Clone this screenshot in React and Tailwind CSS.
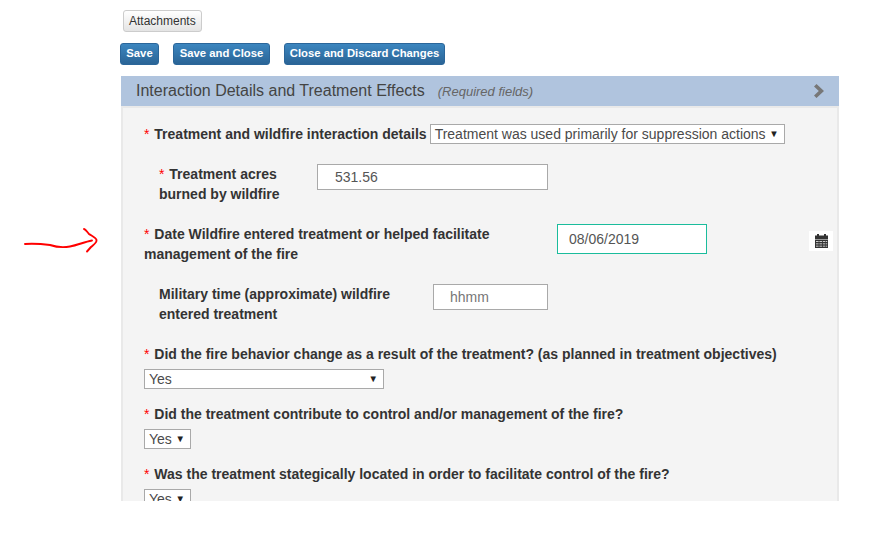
import React from "react";

const Star = () => <span className="text-[#ff0000] font-normal mr-[1px]">*</span>;

const Sel = ({ w, children }) => (
  <div className={`flex items-center justify-between h-[20px] bg-white border border-[#a9a9a9] pl-[4px] pr-[5px] font-normal text-[14px] text-[#4a4a4a] leading-none ${w}`}>
    <span>{children}</span>
    <span className="text-[9.5px] text-[#222]">▼</span>
  </div>
);

const Btn = ({ w, children }) => (
  <button className={`h-[22px] rounded-[3px] border border-[#2b669a] bg-gradient-to-b from-[#3c86bf] to-[#2a6496] text-white text-[11.3px] font-bold leading-none ${w}`}>
    {children}
  </button>
);

const Cal = () => (
  <svg width="13" height="14" viewBox="0 0 13 14" fill="#333">
    <rect x="2" y="0" width="2" height="2" />
    <rect x="9" y="0" width="2" height="2" />
    <path d="M0 1.5h13V5H0z" />
    <path fillRule="evenodd" d="M0 5.500h13V14H0z M1 7.300h2.600v.6H1z M4.400 7.300h2.600v.6H4.400z M7.800 7.300h2.200v.6H7.800z M10.600 7.300h1.600v.6h-1.600z M1 9.600h2.600v.6H1z M4.400 9.600h2.600v.6H4.400z M7.800 9.600h2.200v.6H7.800z M10.600 9.600h1.600v.6h-1.600z M1 11.800h2.600v.6H1z M4.400 11.800h2.600v.6H4.400z M7.800 11.800h2.200v.6H7.800z M10.600 11.800h1.600v.6h-1.600z" />
  </svg>
);

export default function App() {
  return (
    <div className="relative w-[890px] h-[535px] overflow-hidden bg-white font-['Liberation_Sans',Arial,sans-serif] text-[14px] text-[#333]">
      <svg className="absolute left-[20px] top-[225px]" width="85" height="32" viewBox="0 0 85 32" fill="none" stroke="#f00" strokeWidth="1.9" strokeLinecap="round" strokeLinejoin="round">
        <path d="M5 19 C14 18.500 22 19 30 20 C36 22 42 23 50 21.500 C58 20 64 17 72 15.500" />
        <path d="M64 4 C66 4.500 67 7 69 9 C72 11 76 12.500 76.500 15 C77 18 73 20 71 22 L67 26.500" />
      </svg>

      <div className="ml-[120px] w-[719px] flex flex-col">
        <div className="pt-[10px] pl-[3px]">
          <button className="h-[22px] px-[5px] rounded-[3px] border border-[#ccc] bg-gradient-to-b from-white to-[#e4e4e4] text-[12px] text-[#333] leading-none">
            Attachments
          </button>
        </div>
        <div className="flex mt-[11px] gap-[14px]">
          <Btn w="w-[39px]">Save</Btn>
          <Btn w="w-[97px]">Save and Close</Btn>
          <Btn w="w-[161px]">Close and Discard Changes</Btn>
        </div>
        <div className="ml-[1px] mt-[11px] h-[30px] bg-[#b0c4de] flex items-center justify-between pl-[15px] pr-[14px]">
          <div className="flex items-baseline">
            <span className="text-[16px] text-[#444]">Interaction Details and Treatment Effects</span>
            <span className="ml-[13px] text-[13px] italic text-[#666]">(Required fields)</span>
          </div>
          <svg width="12" height="14" viewBox="0 0 12 14" fill="#777"><path d="M1 2.500 L3.500 0 L11 7 L3.500 14 L1 11.500 L5.800 7 Z" /></svg>
        </div>
        <div className="ml-[1px] h-[395px] overflow-hidden bg-[#f4f4f4] border-x-2 border-t-2 border-[#e9e9e9] pl-[21px] font-bold">
          <div className="flex items-center mt-[16px] h-[20px]">
            <span><Star /> Treatment and wildfire interaction details</span>
            <Sel w="ml-[3px] w-[355px]">Treatment was used primarily for suppression actions</Sel>
          </div>
          <div className="flex mt-[20px] pl-[15px]">
            <div className="w-[158px] leading-[20px]"><Star /> Treatment acres<br />burned by wildfire</div>
            <div className="h-[26px] w-[231px] bg-white border border-[#a9a9a9] pl-[17px] font-normal text-[#555] flex items-center">531.56</div>
          </div>
          <div className="flex mt-[20px]">
            <div className="w-[413px] leading-[20px]"><Star /> Date Wildfire entered treatment or helped facilitate<br />management of the fire</div>
            <div className="h-[30px] w-[150px] bg-white border border-[#1abc9c] pl-[11px] font-normal text-[#555] flex items-center">08/06/2019</div>
            <div className="ml-[102px] mt-[7px] w-[24px] h-[20px] bg-white flex items-center justify-center"><Cal /></div>
          </div>
          <div className="flex mt-[20px] pl-[15px]">
            <div className="w-[274px] leading-[20px]">Military time (approximate) wildfire<br />entered treatment</div>
            <div className="h-[26px] w-[115px] bg-white border border-[#a9a9a9] pl-[16px] font-normal text-[#777] flex items-center">hhmm</div>
          </div>
          <div className="mt-[20px] leading-[20px]"><Star /> Did the fire behavior change as a result of the treatment? (as planned in treatment objectives)</div>
          <Sel w="mt-[5px] w-[240px]">Yes</Sel>
          <div className="mt-[15px] leading-[20px]"><Star /> Did the treatment contribute to control and/or management of the fire?</div>
          <Sel w="mt-[5px] w-[47px]">Yes</Sel>
          <div className="mt-[15px] leading-[20px]"><Star /> Was the treatment stategically located in order to facilitate control of the fire?</div>
          <Sel w="mt-[5px] w-[47px]">Yes</Sel>
        </div>
      </div>
    </div>
  );
}
